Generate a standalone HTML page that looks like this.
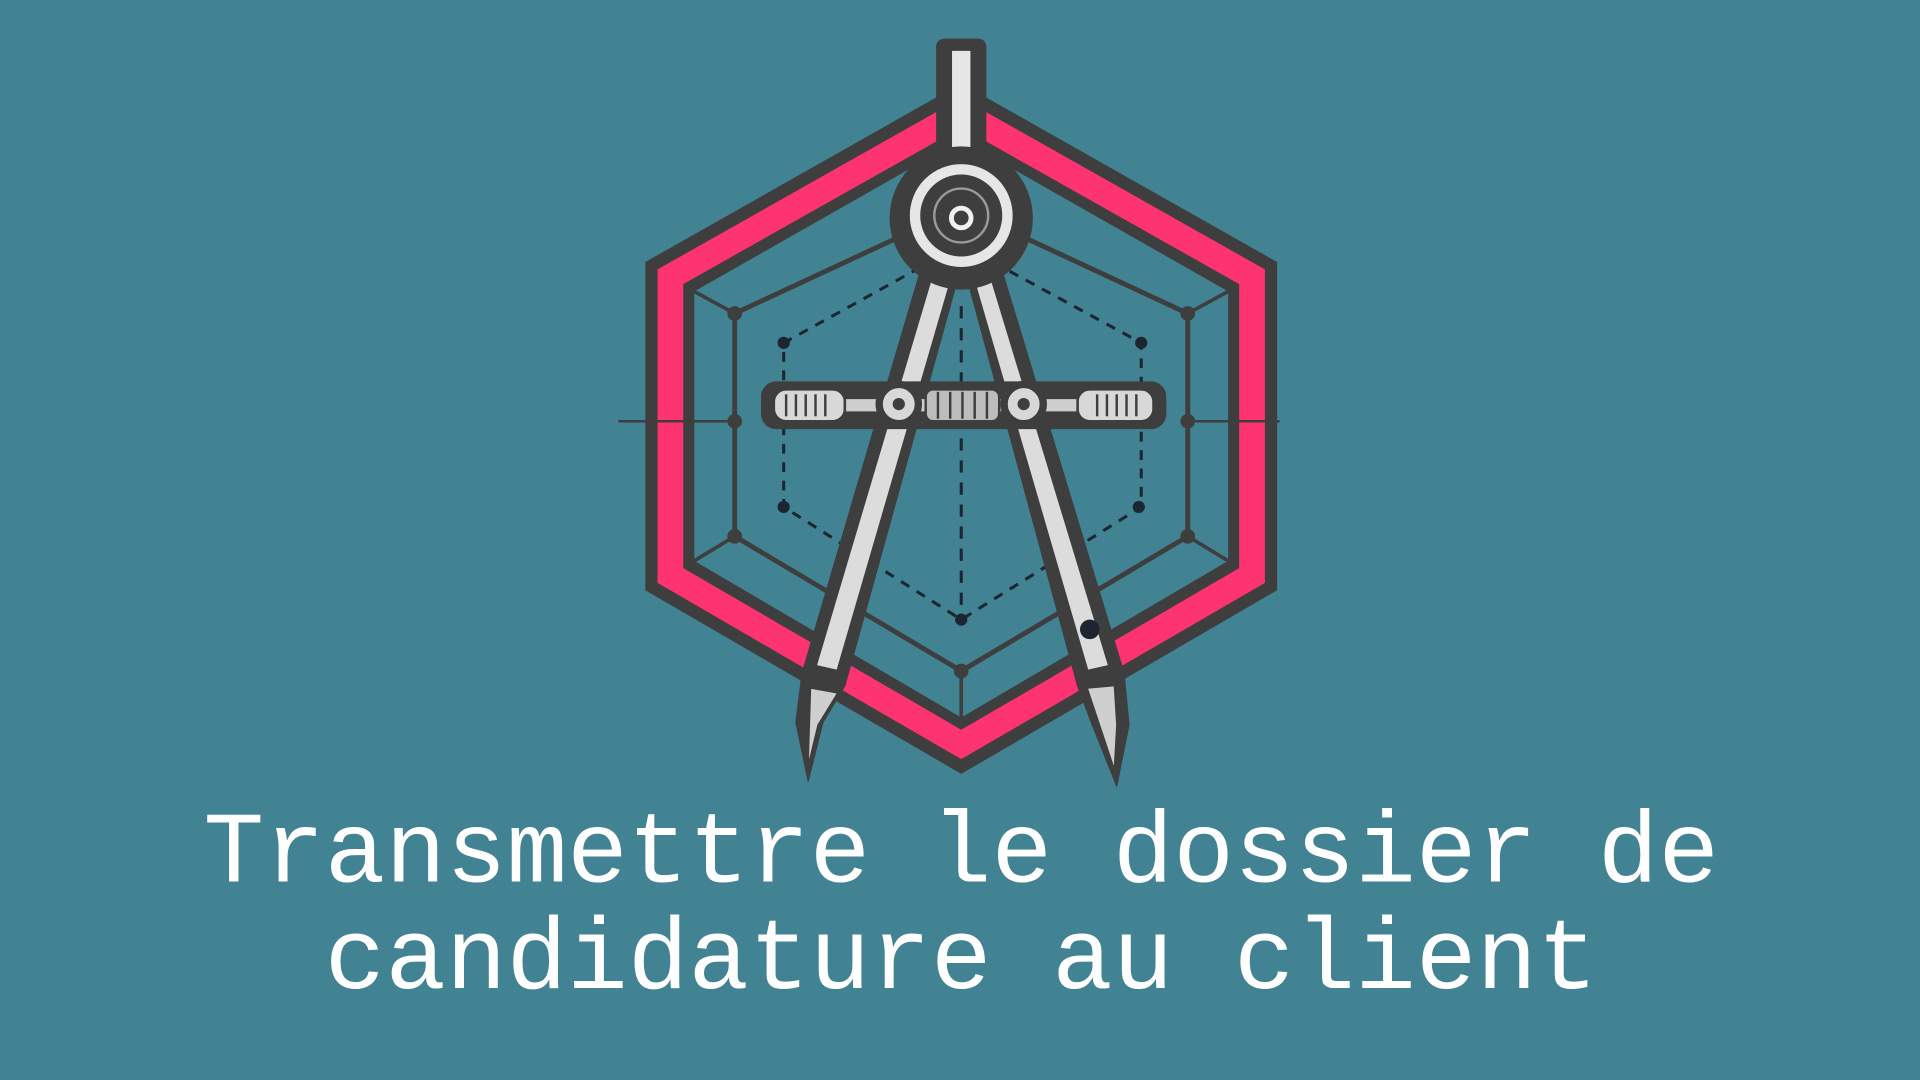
<!DOCTYPE html>
<html><head><meta charset="utf-8"><style>
html,body{margin:0;padding:0;background:#428393;width:1920px;height:1080px;overflow:hidden}
svg{display:block}
</style></head><body>
<svg width="1920" height="1080" viewBox="0 0 1568 882" xmlns="http://www.w3.org/2000/svg">
<rect width="1568" height="882" fill="#428393"/>
<!-- outer hex -->
<polygon points="785,68 1043,214 1043,482 785,632 527,482 527,214" fill="#3e3e3e"/>
<polygon points="785,80 1033,220 1033,476 785,620 537,476 537,220" fill="#fe3371"/>
<polygon points="785,104 1012,232 1012,464 785,596 558,464 558,232" fill="#3e3e3e"/>
<polygon points="785,114 1003,238 1003,458 785,586 567,458 567,238" fill="#428393"/>
<!-- inner thin hex -->
<polygon points="785,170 970,256 970,438 785,548 600,438 600,256" fill="none" stroke="#3e3e3e" stroke-width="4"/>
<line x1="567" y1="238" x2="600" y2="256" stroke="#3e3e3e" stroke-width="3"/>
<line x1="1003" y1="238" x2="970" y2="256" stroke="#3e3e3e" stroke-width="3"/>
<line x1="567" y1="458" x2="600" y2="438" stroke="#3e3e3e" stroke-width="3"/>
<line x1="1003" y1="458" x2="970" y2="438" stroke="#3e3e3e" stroke-width="3"/>
<line x1="785" y1="548" x2="785" y2="586" stroke="#3e3e3e" stroke-width="3"/>
<line x1="505" y1="344" x2="600" y2="344" stroke="#3e3e3e" stroke-width="2"/>
<line x1="970" y1="344" x2="1045" y2="344" stroke="#3e3e3e" stroke-width="2"/>
<!-- dashed hex -->
<polygon points="785,200 932,280 932,414 785,506 640,414 640,280" fill="none" stroke="#1c2630" stroke-width="2.5" stroke-dasharray="8,7"/>
<line x1="785" y1="250" x2="785" y2="506" stroke="#1c2630" stroke-width="2.5" stroke-dasharray="10,8"/>
<g fill="#1c2630"><circle cx="640" cy="280" r="5"/><circle cx="932" cy="280" r="5"/><circle cx="640" cy="414" r="5"/><circle cx="930" cy="414" r="5"/><circle cx="785" cy="506" r="5"/></g>
<g fill="#3e3e3e"><circle cx="600" cy="256" r="6"/><circle cx="970" cy="256" r="6"/><circle cx="600" cy="344" r="6"/><circle cx="970" cy="344" r="6"/><circle cx="600" cy="438" r="6"/><circle cx="970" cy="438" r="6"/><circle cx="785" cy="548" r="6"/></g>
<!-- compass -->
<g stroke="#3e3e3e" stroke-linejoin="round">
<rect x="765" y="32" width="40" height="100" rx="6" fill="#3e3e3e"/>
<rect x="776" y="40" width="18" height="88" fill="#e6e6e6" stroke-width="3"/>
<!-- legs -->
<polygon points="752,220 782,228 690,560 655,550" fill="#3e3e3e"/>
<polygon points="760,228 776,232 684,548 666,544" fill="#dcdcdc" stroke-width="2"/>
<polygon points="818,220 790,228 880,560 918,550" fill="#3e3e3e"/>
<polygon points="810,228 796,232 888,548 906,544" fill="#dcdcdc" stroke-width="2"/>
<polygon points="655,550 690,560 672,590 660,638 650,590" fill="#3e3e3e"/>
<polygon points="662,562 684,566 668,592 660,625" fill="#cfcfcf" stroke-width="1"/>
<polygon points="880,560 918,550 922,592 912,642 892,592" fill="#3e3e3e"/>
<polygon points="888,562 910,560 912,592 910,628" fill="#cfcfcf" stroke-width="1"/>
<!-- crossbar -->
<rect x="622" y="312" width="330" height="38" rx="12" fill="#3e3e3e"/>
<rect x="632" y="318" width="58" height="26" rx="10" fill="#d8d8d8" stroke-width="2"/>
<rect x="880" y="318" width="62" height="26" rx="10" fill="#d8d8d8" stroke-width="2"/>
<rect x="690" y="325" width="190" height="12" fill="#cfcfcf" stroke-width="2"/>
<rect x="756" y="318" width="60" height="26" rx="6" fill="#bdbdbd" stroke-width="2"/>
<circle cx="734" cy="330" r="16" fill="#d8d8d8" stroke-width="6"/>
<circle cx="836" cy="330" r="16" fill="#d8d8d8" stroke-width="6"/>
<!-- head -->
<circle cx="785" cy="178" r="58" fill="#3e3e3e"/>
<circle cx="785" cy="176" r="44" fill="#e6e6e6" stroke-width="4"/>
<circle cx="785" cy="176" r="33" fill="#3e3e3e"/>
</g>
<g stroke="#3e3e3e" stroke-width="2">
<line x1="642" y1="322" x2="642" y2="340"/><line x1="650" y1="322" x2="650" y2="340"/><line x1="658" y1="322" x2="658" y2="340"/><line x1="666" y1="322" x2="666" y2="340"/><line x1="674" y1="322" x2="674" y2="340"/>
<line x1="896" y1="322" x2="896" y2="340"/><line x1="904" y1="322" x2="904" y2="340"/><line x1="912" y1="322" x2="912" y2="340"/><line x1="920" y1="322" x2="920" y2="340"/><line x1="928" y1="322" x2="928" y2="340"/>
<line x1="766" y1="320" x2="766" y2="342"/><line x1="776" y1="320" x2="776" y2="342"/><line x1="786" y1="320" x2="786" y2="342"/><line x1="796" y1="320" x2="796" y2="342"/><line x1="806" y1="320" x2="806" y2="342"/>
</g>
<circle cx="785" cy="176" r="22" fill="none" stroke="#9a9a9a" stroke-width="2"/>
<circle cx="785" cy="178" r="8" fill="none" stroke="#f0f0f0" stroke-width="4"/>
<circle cx="734" cy="330" r="5" fill="#3e3e3e"/><circle cx="836" cy="330" r="5" fill="#3e3e3e"/>
<circle cx="890" cy="514" r="8" fill="#1c2630"/>
<text x="785" y="720" text-anchor="middle" font-family="'Liberation Mono', monospace" font-size="82.5" fill="#ffffff">Transmettre le dossier de</text>
<text x="785" y="807" text-anchor="middle" font-family="'Liberation Mono', monospace" font-size="82.5" fill="#ffffff">candidature au client</text>
</svg>
</body></html>
